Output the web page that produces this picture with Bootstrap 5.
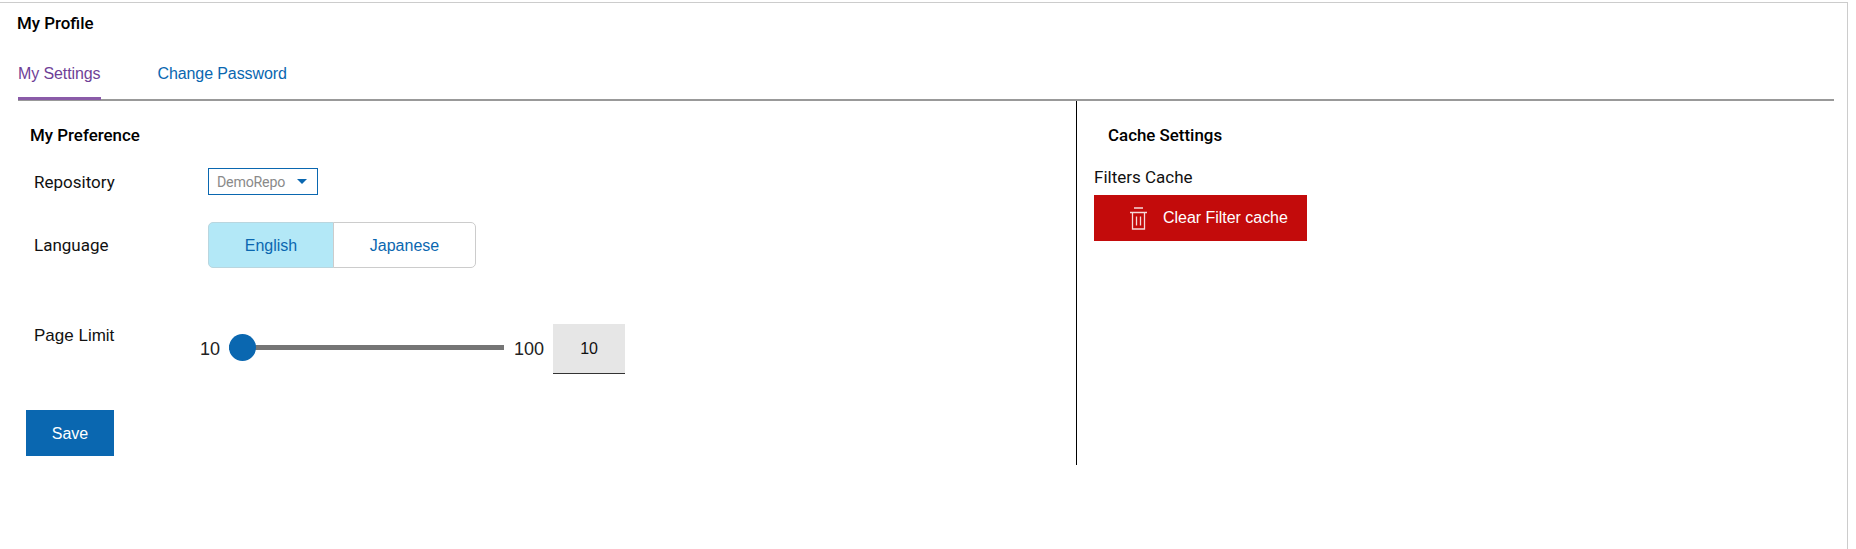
<!DOCTYPE html>
<html lang="en">
<head>
<meta charset="utf-8">
<title>My Profile</title>
<link rel="stylesheet" href="https://cdn.jsdelivr.net/npm/bootstrap@5.3.0/dist/css/bootstrap.min.css">
<style>
html,body{height:100%;background:#fff;overflow:hidden}
body{font-family:Roboto,"Liberation Sans",sans-serif;color:#111}
.frame{margin-top:2px;width:1848px;height:547px;border-top:1px solid #ccc;border-right:1px solid #ccc;padding:0 14px 0 17px}
.page-title{font-size:16.9px;font-weight:500;line-height:20px;margin:0;padding-top:10px;height:46px;color:#000}
.tabbar{height:52px;width:1816px;border-bottom:2px solid #999;gap:57px;margin-left:1px;flex-wrap:nowrap}
.tabbar .nav-link{padding:0;height:51px;font:16px/49px "Liberation Sans",sans-serif;color:#0a67b0;border-bottom:3px solid transparent;letter-spacing:-.1px}
.tabbar .nav-link.active{color:#6f3f97;border-bottom-color:#8a5ba8}
.panes{height:364px;margin-left:-17px}
.pane-left{width:1077px;border-right:1px solid #000;padding-left:26px;flex:none}
.pane-right{padding-left:17px}
.sect{font-size:16.9px;font-weight:500;line-height:20px;margin:0;color:#000}
.left-head{padding:24px 0 0 4px;height:67px}
.right-head{padding:24px 0 0 14px;height:65px}
.rowline{display:flex;align-items:center}
.lab{width:182px;padding-left:8px;font-size:17px;flex:none;position:relative;top:1px}
.repo-btn{width:110px;height:27px;padding:0 8px;border:1px solid #0a67b0;border-radius:0;background:#fff;color:#8a8a8a;font-size:14.2px;line-height:24px;display:flex;align-items:center;justify-content:space-between;letter-spacing:-.2px}
.repo-btn.dropdown-toggle::after{border-top:5px solid #0a67b0;border-right:5px solid transparent;border-left:5px solid transparent;border-bottom:0;margin:0 2px 0 0}
.lang-row{margin-top:27px}
.langs{width:268px;height:46px}
.langs .btn{font:16px/44px "Liberation Sans",sans-serif;color:#0a67b0;border:1px solid #ccc;background:#fff;border-radius:5px;padding:1px 0 0}
.langs .btn.on{background:#b3e8f7;width:126px;flex:none;border-color:#b9d6df}
.limit-row{margin-top:56px;height:50px;align-items:flex-start}
.limit-lab{padding-top:1px;line-height:22px;width:174px;font-family:"Liberation Sans",sans-serif;font-size:17px;padding-left:8px;flex:none}
.lim{font-family:"Liberation Sans",sans-serif;font-size:18px;line-height:50px;color:#222}
.slider{width:275px;margin:0 10px 0 9px;height:49px;padding:0;display:block;position:relative;top:-1px}
.slider::-webkit-slider-runnable-track{height:5px;background:#757575;border-radius:0}
.slider::-webkit-slider-thumb{width:27px;height:27px;margin-top:-11px;background:#0a67b0;border-radius:50%;border:0}
.numbox{width:72px;height:50px;margin-left:9px;border:0;border-bottom:1px solid #333;border-radius:0;background:#e6e6e6;text-align:center;font:16px "Liberation Sans",sans-serif;color:#111;padding:0}
.save{width:88px;height:46px;margin-top:36px;background:#0a67b0;border:0;border-radius:0;color:#fff;font:16px/46px "Liberation Sans",sans-serif;padding:1px 0 0}
.filters{font-size:17px;line-height:22px;margin:0 0 7px 0}
.clear{width:213px;height:46px;background:#c30b0b;border:0;border-radius:0;color:#fff;font:16px "Liberation Sans",sans-serif;padding:0 0 0 36px;gap:16px;letter-spacing:-.03px}
.clear svg{flex:none}
</style>
</head>
<body>
<div class="frame">
  <h1 class="page-title">My Profile</h1>
  <ul class="nav tabbar">
    <li class="nav-item"><a class="nav-link active" href="#">My Settings</a></li>
    <li class="nav-item"><a class="nav-link" href="#">Change Password</a></li>
  </ul>
  <div class="panes d-flex">
    <div class="pane-left">
      <h2 class="sect left-head">My Preference</h2>
      <div class="rowline">
        <div class="lab">Repository</div>
        <button type="button" class="btn repo-btn dropdown-toggle">DemoRepo</button>
      </div>
      <div class="rowline lang-row">
        <div class="lab">Language</div>
        <div class="btn-group langs" role="group">
          <button type="button" class="btn on">English</button>
          <button type="button" class="btn">Japanese</button>
        </div>
      </div>
      <div class="rowline limit-row">
        <div class="limit-lab">Page Limit</div>
        <span class="lim">10</span>
        <input type="range" class="form-range slider" min="10" max="100" value="10" aria-label="Page Limit">
        <span class="lim">100</span>
        <input type="text" class="numbox" value="10" aria-label="Page Limit value">
      </div>
      <button type="button" class="btn save">Save</button>
    </div>
    <div class="pane-right">
      <h2 class="sect right-head">Cache Settings</h2>
      <p class="filters">Filters Cache</p>
      <button type="button" class="btn clear d-flex align-items-center">
        <svg width="17" height="23" viewBox="0 0 17 23" fill="none" stroke="#fff" stroke-width="1.300" opacity=".85">
          <path d="M4 1h9M0 5.500h17M2.500 5.500V22h12V5.500M6.500 9.500v9M10.500 9.500v9"/>
        </svg>
        <span>Clear Filter cache</span>
      </button>
    </div>
  </div>
</div>
<script src="https://cdn.jsdelivr.net/npm/bootstrap@5.3.0/dist/js/bootstrap.bundle.min.js"></script>
</body>
</html>
